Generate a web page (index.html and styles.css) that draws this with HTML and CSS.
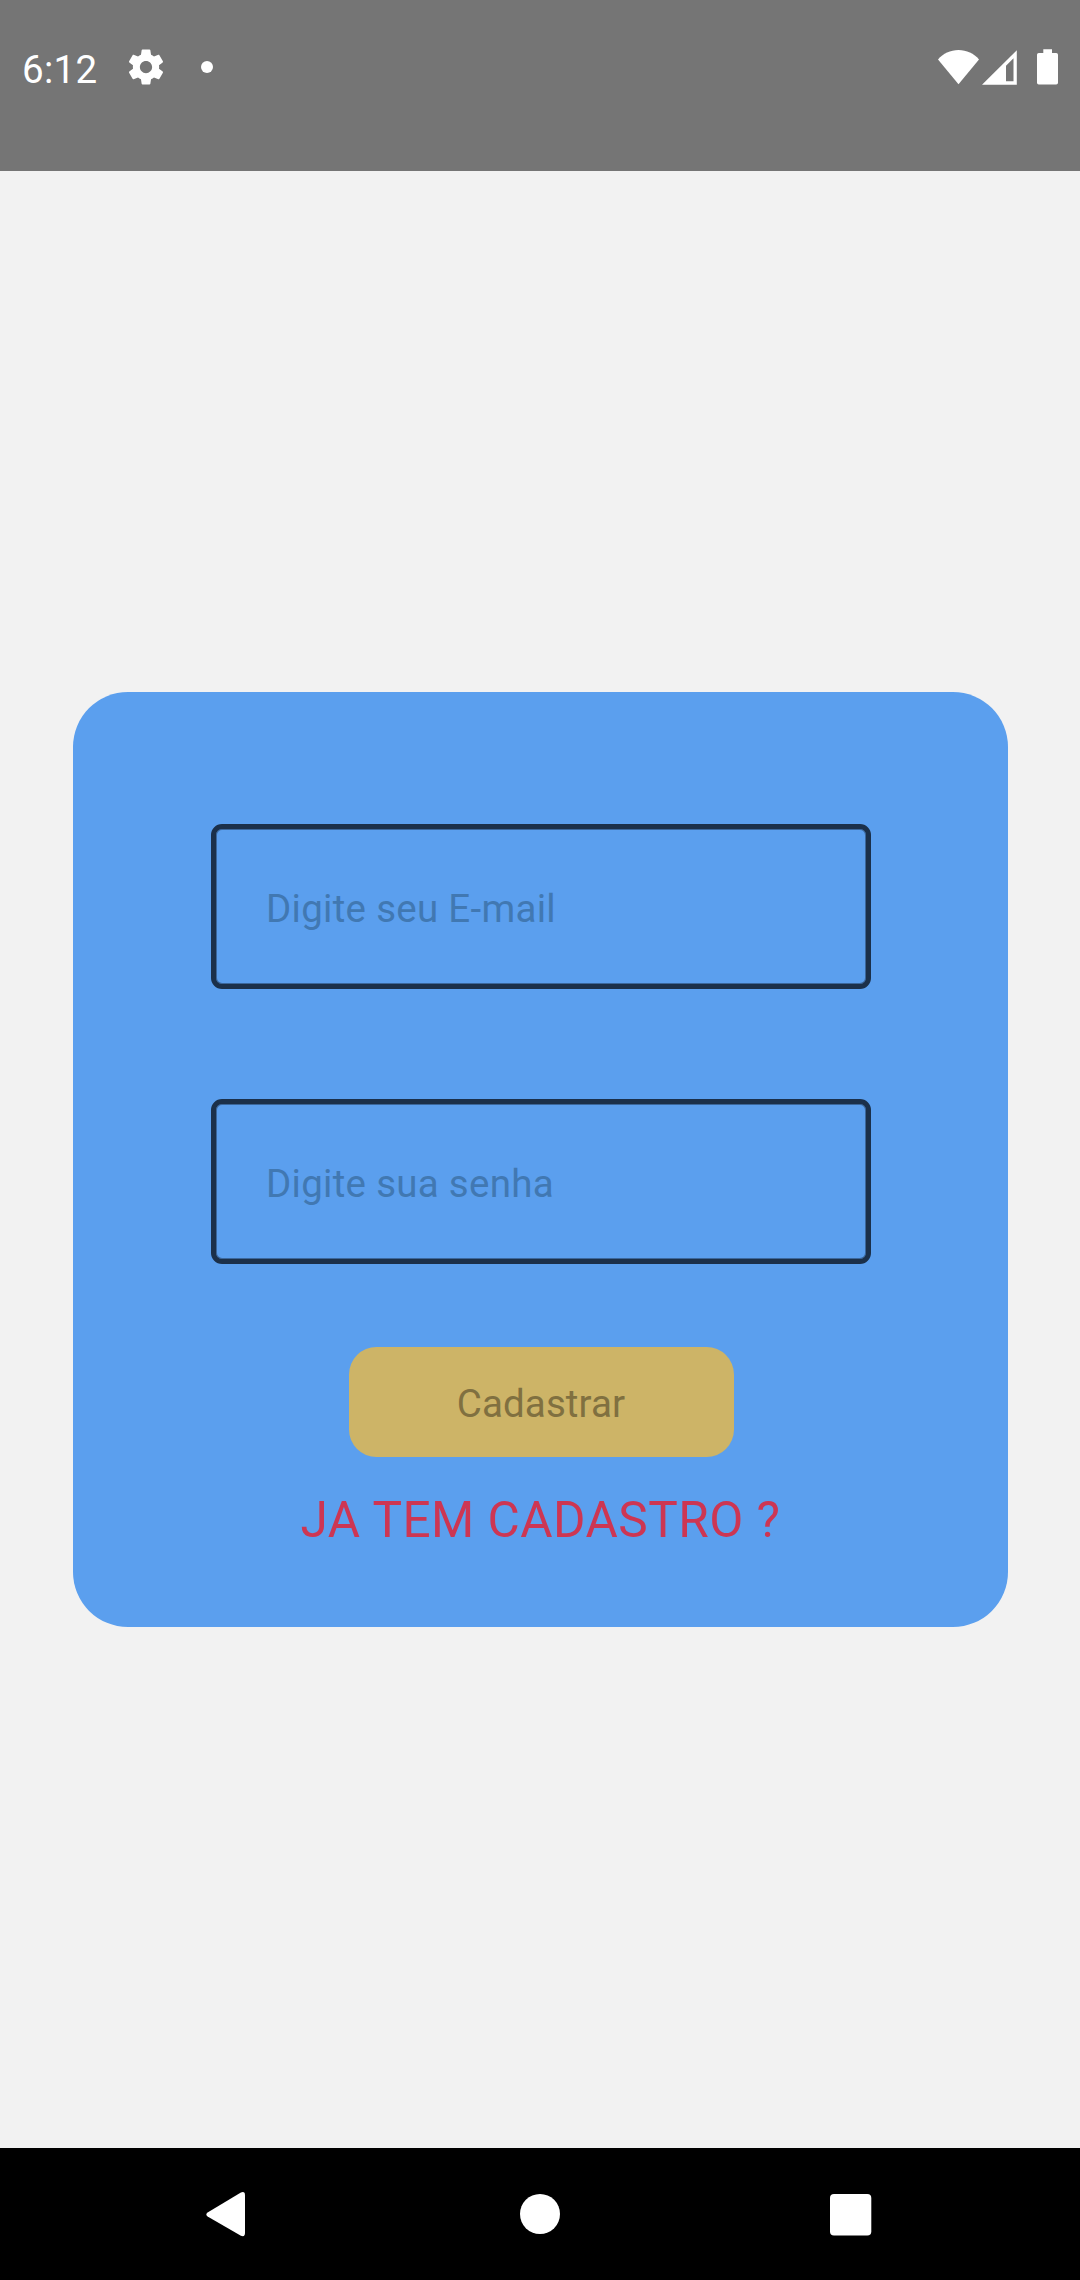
FILE: index.html
```
<!DOCTYPE html>
<html lang="pt-BR">
<head>
<meta charset="utf-8">
<title>Cadastro</title>
<link rel="stylesheet" href="styles.css">
</head>
<body>
<div class="screen">
  <header class="status-bar">
    <div class="status-left">
      <span class="clock">6:12</span>
      <svg class="gear" viewBox="0 0 24 24"><path d="M19.43 12.98c.04-.32.07-.64.07-.98s-.03-.66-.07-.98l2.11-1.65c.19-.15.24-.42.12-.64l-2-3.46c-.12-.22-.39-.3-.61-.22l-2.49 1c-.52-.4-1.08-.73-1.69-.98l-.38-2.65C14.46 2.18 14.25 2 14 2h-4c-.25 0-.46.18-.49.42l-.38 2.65c-.61.25-1.17.59-1.69.98l-2.49-1c-.23-.09-.49 0-.61.22l-2 3.46c-.13.22-.07.49.12.64l2.11 1.65c-.04.32-.07.65-.07.98s.03.66.07.98l-2.11 1.65c-.19.15-.24.42-.12.64l2 3.46c.12.22.39.3.61.22l2.49-1c.52.4 1.08.73 1.69.98l.38 2.65c.03.24.24.42.49.42h4c.25 0 .46-.18.49-.42l.38-2.65c.61-.25 1.17-.59 1.69-.98l2.49 1c.23.09.49 0 .61-.22l2-3.46c.12-.22.07-.49-.12-.64l-2.11-1.65zM12 15.5c-1.93 0-3.5-1.57-3.5-3.5s1.57-3.5 3.5-3.5 3.5 1.57 3.5 3.5-1.57 3.5-3.5 3.5z"/></svg>
      <span class="dot"></span>
    </div>
    <svg class="status-right" viewBox="0 0 122 36">
      <path d="M0 10.400C5 4.500 12.500 1 20.500 1s15.500 3.500 20.500 9.400L20.500 35.300z"/>
      <path fill-rule="evenodd" d="M44 35.700 78.800 1.200V35.700zM68 16.800V32.200h7.500V9.300z"/>
      <path d="M105.300 0.300h8.700v3.700h4.200a1.800 1.800 0 0 1 1.800 1.800v28a1.800 1.800 0 0 1-1.800 1.800h-17.400a1.800 1.800 0 0 1-1.800-1.800V5.800a1.800 1.800 0 0 1 1.800-1.800h4.500z"/>
    </svg>
  </header>
  <main class="content">
    <form class="card">
      <input class="field" type="text" placeholder="Digite seu E-mail" aria-label="E-mail">
      <input class="field" type="text" placeholder="Digite sua senha" aria-label="Senha">
      <button class="submit" type="button">Cadastrar</button>
      <a class="login-link">JA TEM CADASTRO ?</a>
    </form>
  </main>
  <nav class="nav-bar">
    <svg class="nav-icon" viewBox="0 0 48 48"><path d="M5.600 22.500 38.900 2.500Q43 .9 43 5.200V43Q43 47.300 38.900 45.700L5.600 26.500Q3 24.500 5.600 22.500z"/></svg>
    <svg class="nav-icon home" viewBox="0 0 48 48"><circle cx="24" cy="24" r="20"/></svg>
    <svg class="nav-icon" viewBox="0 0 48 48"><rect x="4" y="4" width="41.300" height="41.500" rx="4"/></svg>
  </nav>
</div>
</body>
</html>
```
FILE: styles.css
```
* { box-sizing: border-box; }
body {
  margin: 0;
  font-family: Roboto, "Liberation Sans", sans-serif;
}
.screen {
  width: 1080px;
  height: 2280px;
  display: flex;
  flex-direction: column;
  background: #f2f2f2;
}
svg { display: block; fill: #fff; }
.status-bar {
  height: 171px;
  padding: 46px 20px 0 22px;
  display: flex;
  justify-content: space-between;
  align-items: flex-start;
  background: #757575;
  color: #fff;
}
.status-left { display: flex; align-items: center; height: 42px; }
.clock { width: 80px; font-size: 38.500px; line-height: 44px; padding-top: 5px; letter-spacing: .3px; }
.gear { width: 42px; height: 42px; margin-left: 23px; }
.dot { width: 12px; height: 12px; margin-left: 34px; border-radius: 50%; background: #fff; }
.status-right { width: 122px; height: 36px; margin-top: 3px; }
.content {
  flex: 1;
  display: flex;
  justify-content: center;
  align-items: center;
  padding-left: 1px;
}
.card {
  width: 935px;
  height: 935px;
  padding-top: 132px;
  display: flex;
  flex-direction: column;
  align-items: center;
  border-radius: 55px;
  background: #5b9fee;
}
.field {
  width: 660px;
  height: 165px;
  margin: 0 0 110px 1px;
  padding: 3px 50px 0;
  border: 5px solid #1b304a;
  border-radius: 11px;
  box-shadow: inset 0 0 0 1px rgba(27, 48, 74, .5);
  background: transparent;
  font: inherit;
  font-size: 38.500px;
  letter-spacing: .28px;
  outline: none;
}
.field + .field { margin-bottom: 83px; }
.field::placeholder { color: #4178b2; opacity: 1; }
.submit {
  width: 385px;
  height: 110px;
  margin-left: 1px;
  padding: 3px 0 0;
  border: 0;
  border-radius: 27.500px;
  background: #cdb467;
  color: #807040;
  font: inherit;
  font-size: 38.500px;
  letter-spacing: .1px;
}
.login-link {
  margin-top: 34px;
  font-size: 49.500px;
  line-height: 58px;
  letter-spacing: .5px;
  color: #cd3653;
}
.nav-bar {
  height: 132px;
  padding: 42px 206px 0 202px;
  display: flex;
  justify-content: space-between;
  background: #000;
}
.nav-icon { width: 48px; height: 48px; }
.home { margin-left: 4px; }
```
